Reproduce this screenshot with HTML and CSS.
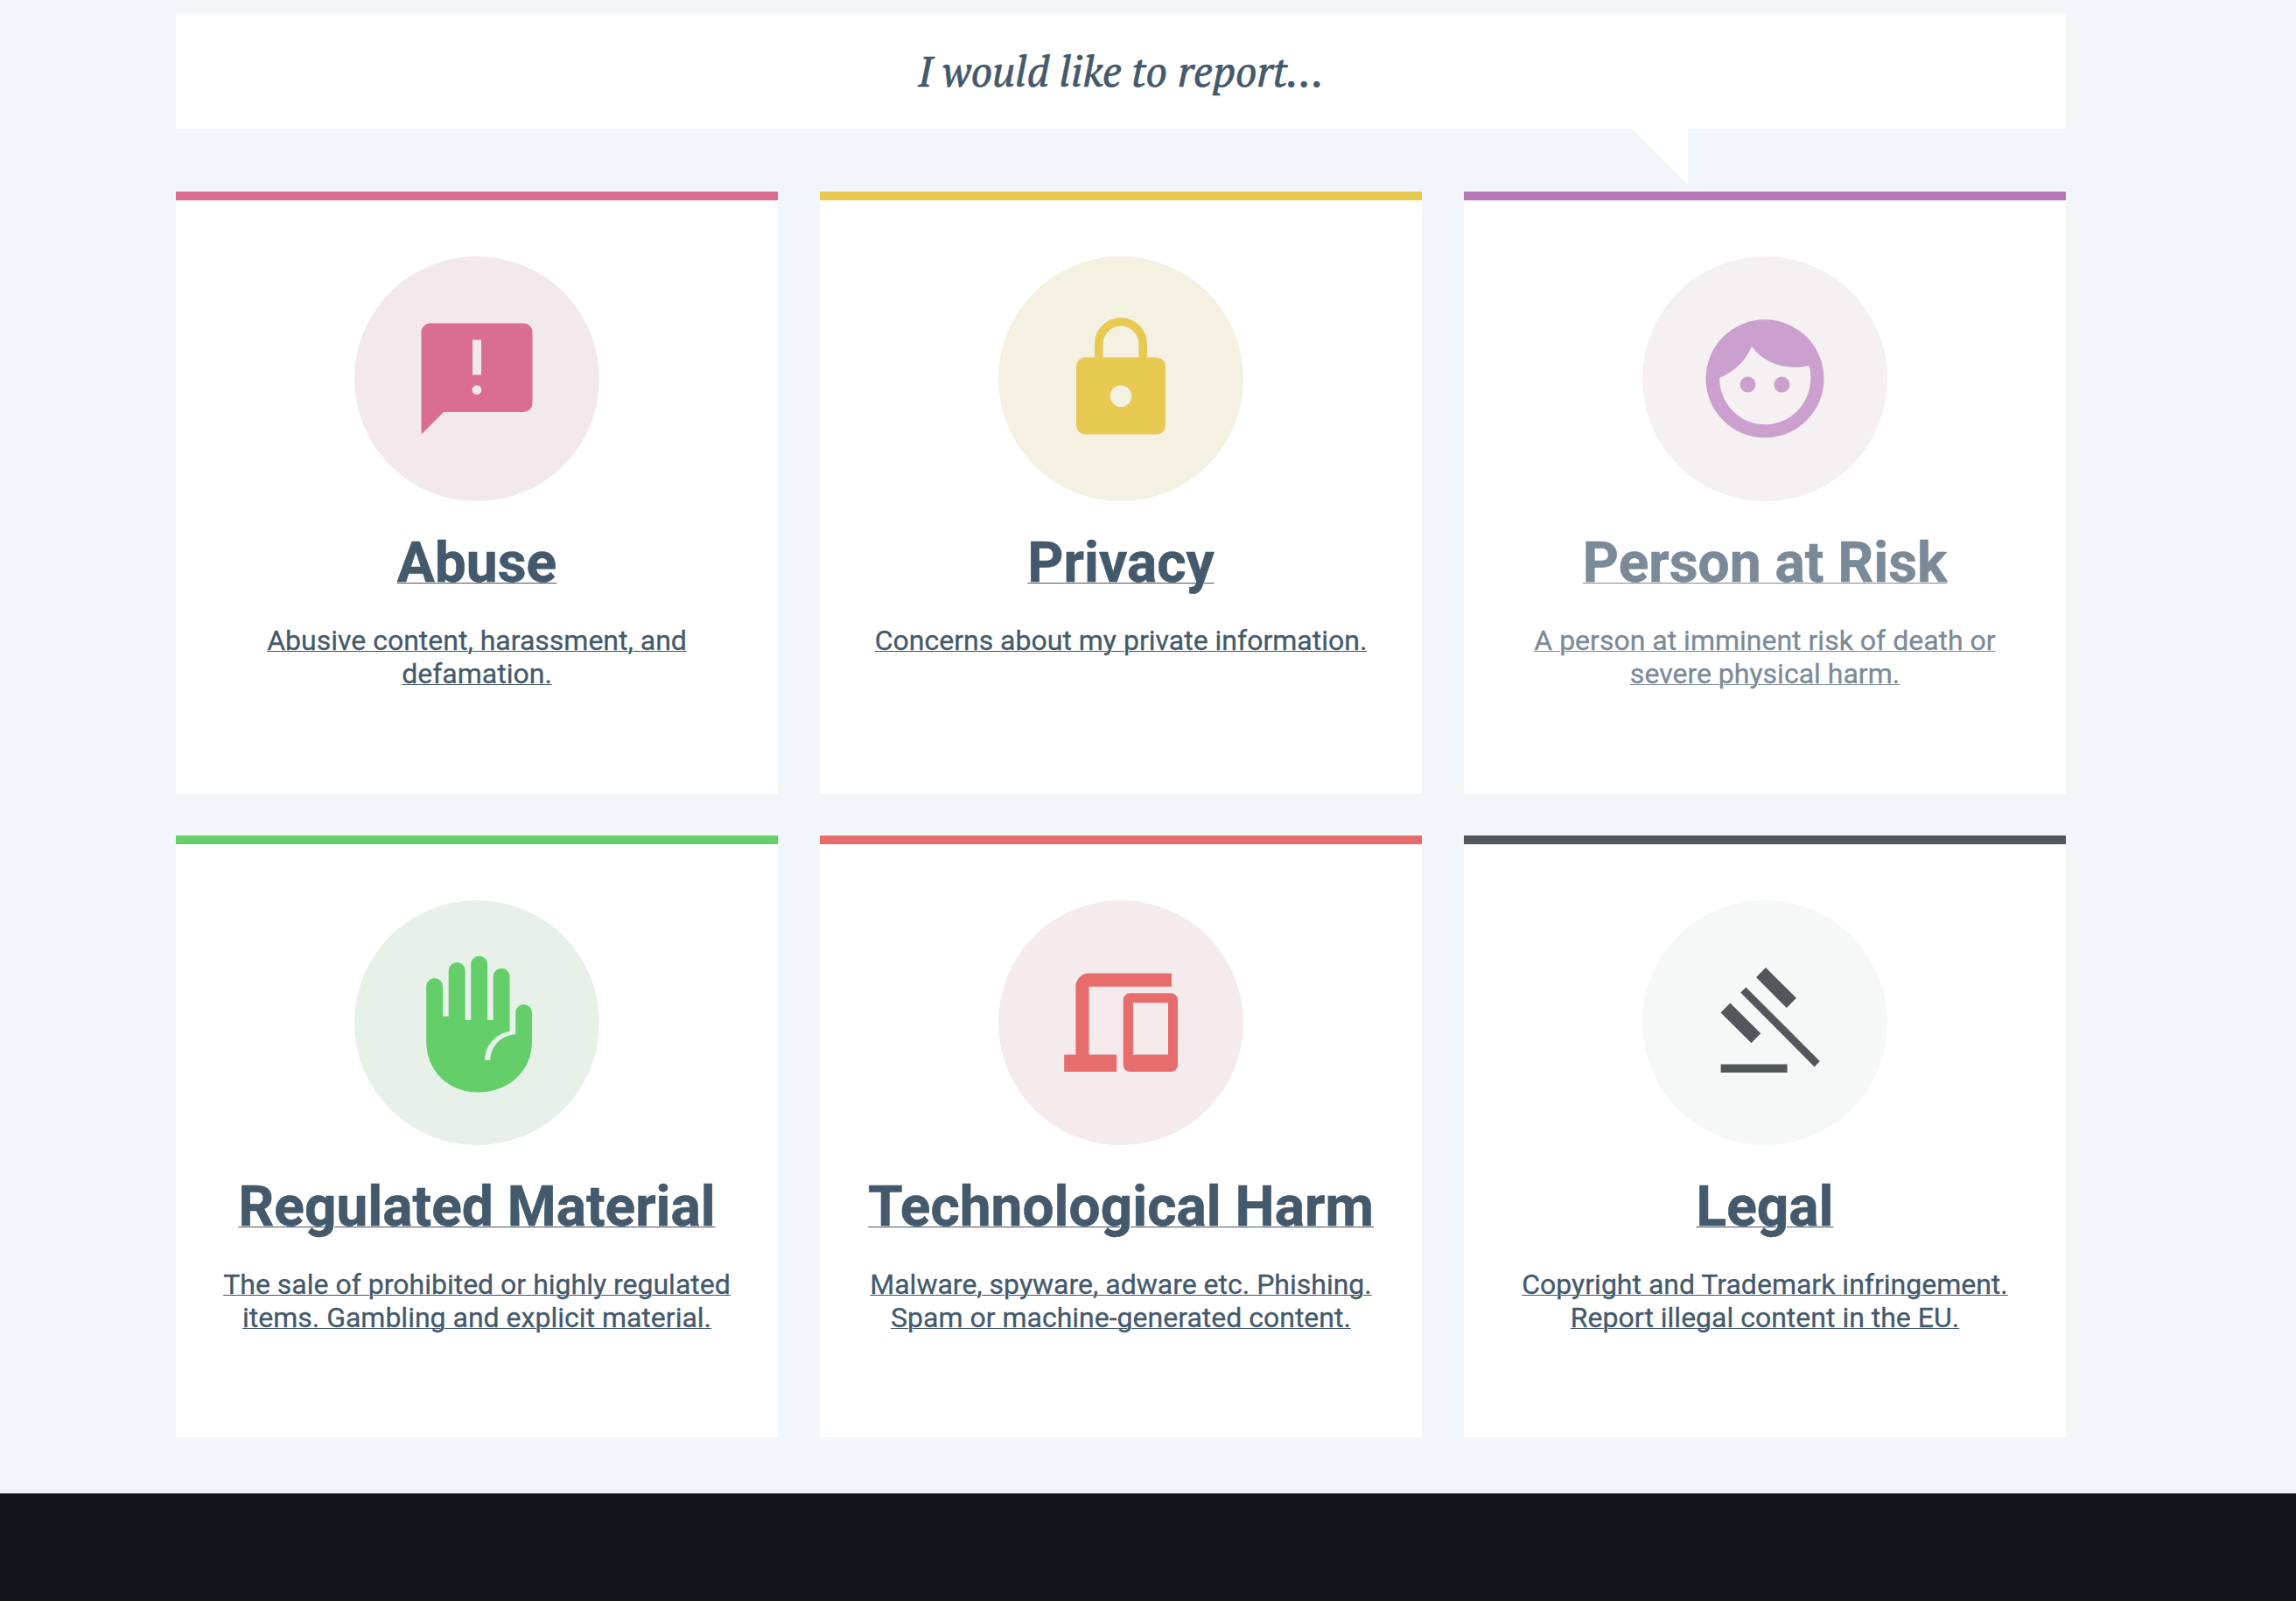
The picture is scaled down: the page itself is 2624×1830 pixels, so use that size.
FILE: index.html
```html
<!DOCTYPE html>
<html lang="en">
<head>
  <meta charset="UTF-8">
  <title>Report</title>
  <link rel="stylesheet" href="styles.css">
</head>
<body>
  <main class="report">
    <div class="bubble">
      <h1>I would like to report…</h1>
    </div>

    <div class="cards">
      <a class="card abuse" href="#abuse">
        <svg class="icon" viewBox="0 0 280 280">
          <path fill-rule="evenodd" d="M86.5 76.6H193.5a10 10 0 0 1 10 10V168a10 10 0 0 1-10 10H102L76.5 203.5V86.6a10 10 0 0 1 10-10zM135 95.5V135.6H145V95.5zM134.6 152.7a5.4 5.4 0 1 0 10.8 0a5.4 5.4 0 1 0-10.8 0z"/>
        </svg>
        <h2>Abuse</h2>
        <p>Abusive content, harassment, and defamation.</p>
      </a>

      <a class="card privacy" href="#privacy">
        <svg class="icon" viewBox="0 0 280 280">
          <path fill="none" stroke="currentColor" stroke-width="9.5" d="M114.8 118V100.1a25.2 25.2 0 0 1 50.4 0V118"/>
          <path fill-rule="evenodd" d="M99 115.5H181a10 10 0 0 1 10 10V193.4a10 10 0 0 1-10 10H99a10 10 0 0 1-10-10V125.5a10 10 0 0 1 10-10zM127.7 159.7a12.3 12.3 0 1 0 24.6 0a12.3 12.3 0 1 0-24.6 0z"/>
        </svg>
        <h2>Privacy</h2>
        <p>Concerns about my private information.</p>
      </a>

      <a class="card risk" href="#risk">
        <svg class="icon" viewBox="0 0 280 280">
          <path fill-rule="evenodd" d="M140 72.3a67.5 67.5 0 1 1 0 135a67.5 67.5 0 1 1 0-135zM88.1 139A52 53.3 0 0 0 140.2 192.3A52 53.3 0 0 0 192.3 139Q192.3 132 190.6 125C163 131 139 122 125 103C118 119 106 131.5 88.1 139z"/>
          <circle cx="120.5" cy="146.6" r="9"/>
          <circle cx="159.5" cy="146.6" r="9"/>
        </svg>
        <h2>Person at Risk</h2>
        <p>A person at imminent risk of death or severe physical harm.</p>
      </a>

      <a class="card regulated" href="#regulated">
        <svg class="icon" viewBox="0 0 280 280">
          <path d="M82.2 98.5a9.45 9.45 0 0 1 18.9 0V132.8H107.7V80.4a9.45 9.45 0 0 1 18.9 0V137H133.2V73.1a9.45 9.45 0 0 1 18.9 0V137H158.7V87.2a9.4 9.4 0 0 1 18.8 0V149.7C161 153 149.2 166 149.2 182.8H155.4C155.4 168 167 154 184.2 153.5V128.5a9.4 9.4 0 0 1 18.8 0V161.6C203 195 177 219.6 141 219.6C105 219.6 82.2 193 82.2 161.6z"/>
        </svg>
        <h2>Regulated Material</h2>
        <p>The sale of prohibited or highly regulated items. Gambling and explicit material.</p>
      </a>

      <a class="card tech" href="#tech">
        <svg class="icon" viewBox="0 0 280 280">
          <path d="M103.4 83.6H198V98.8H103.5V176.6H135.1V196H75.2V176.6H88.4V98.6a15 15 0 0 1 15-15z"/>
          <path fill-rule="evenodd" d="M150.2 106.3H197.5a7.5 7.5 0 0 1 7.5 7.5V188.5a7.5 7.5 0 0 1-7.5 7.5H150.2a7.5 7.5 0 0 1-7.5-7.5V113.8a7.5 7.5 0 0 1 7.5-7.5zM154 117.3V176.6H194V117.3z"/>
        </svg>
        <h2>Technological Harm</h2>
        <p>Malware, spyware, adware etc. Phishing. Spam or machine-generated content.</p>
      </a>

      <a class="card legal" href="#legal">
        <svg class="icon" viewBox="0 0 280 280">
          <path d="M141 77L176 111.8L164.8 123L130 88zM118.4 99.4L202.8 184L196.7 190.5L112.2 105.5zM100.4 117.5L135.3 152.2L124.5 163.3L89.5 128.5zM89.6 187.4H165.6V197H89.6z"/>
        </svg>
        <h2>Legal</h2>
        <p>Copyright and Trademark infringement. Report illegal content in the EU.</p>
      </a>
    </div>
  </main>
  <footer class="footer"></footer>
</body>
</html>
```

FILE: styles.css
```css
* { box-sizing: border-box; }
body { margin: 0; min-height: 1830px; display: flex; flex-direction: column; background: #f2f6f9; color: #44596c; font-family: Roboto, "Liberation Sans", sans-serif; }

.report { width: 2160px; margin-left: 201px; padding: 16px 0 64px; }

/* speech bubble */
.bubble { position: relative; height: 131px; margin-bottom: 72px; background: #fff; text-align: center; }
.bubble::after { content: ""; position: absolute; top: 100%; right: 432px; border-top: 64px solid #fff; border-left: 64px solid transparent; }
.bubble h1 { margin: 0; font: italic 400 48px/131px "PT Serif", "Liberation Serif", serif; -webkit-text-stroke: 0.7px; }

.cards { display: grid; grid-template-columns: repeat(3, 688px); gap: 48px; }
.card { height: 688px; padding: 64px 48px 0; border-top: 10px solid; background: #fff; text-align: center; text-decoration: none; }
.icon { display: block; width: 280px; height: 280px; margin: 0 auto; border-radius: 50%; fill: currentColor; }

.card h2, .card p { color: #44596c; text-decoration: underline; text-decoration-thickness: 1px; text-underline-offset: 1px; }
.card h2 { margin: 33px -20px 31px; font-size: 64px; line-height: 76px; font-weight: 700; -webkit-text-stroke: 0.6px; }
.card p { margin: 0; font-size: 32px; line-height: 38px; -webkit-text-stroke: 0.3px; }

.abuse { color: #da6e92; }
.abuse .icon { background: #f3e8ec; }
.privacy { color: #e8c952; }
.privacy .icon { background: #f4f0e2; }
.risk { color: #b778b7; }
.risk .icon { background: #f5f0f2; color: #cba0cf; }
.risk h2, .risk p { color: #7b8a98; }
.regulated { color: #64cf69; }
.regulated .icon { background: #e7f0e9; }
.tech { color: #e76c6c; }
.tech .icon { background: #f5eaec; }
.legal { color: #52575c; }
.legal .icon { background: #f5f8f7; }

.footer { flex: 1; background: #111518; }
```
